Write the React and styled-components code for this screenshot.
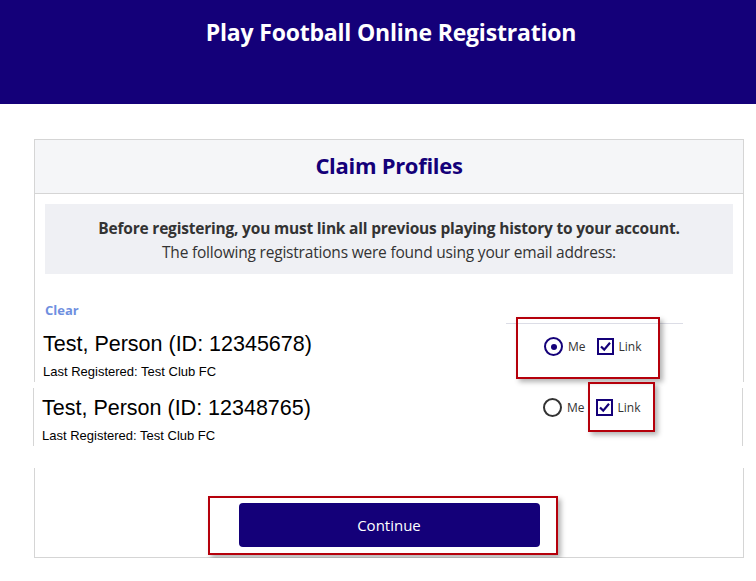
import React from 'react';
import styled, { createGlobalStyle } from 'styled-components';

const navy = '#140079';
const ui = '"Open Sans", "Noto Sans", sans-serif';
const arial = '"Liberation Sans", Arial, sans-serif';

const GlobalStyle = createGlobalStyle`
    html, body {
        margin: 0;
        padding: 0;
        background: #fff;
    }
    * {
        box-sizing: border-box;
    }
`;

const Banner = styled.header`
    height: 104px;
    background-color: ${navy};
    padding-top: 15px;
    text-align: center;
    & h1 {
        margin: 0;
        padding-left: 26px;
        font-family: ${ui};
        font-size: 23px;
        font-weight: 700;
        line-height: 34px;
        color: #fff;
        letter-spacing: -0.2px;
    }
`;

const Main = styled.main`
    position: relative;
    padding: 35px 0 0 34px;
`;

const Piece = styled.section`
    position: relative;
    width: 710px;
    margin-left: ${props => props.shift || 0}px;
    margin-top: ${props => props.gap || 0}px;
    border: 1px solid #d5d5d5;
    border-top-width: ${props => (props.top ? 1 : 0)}px;
    border-bottom-width: ${props => (props.bottom ? 1 : 0)}px;
`;

const CardHead = styled.div`
    height: 54px;
    padding-bottom: 4px;
    background-color: #f5f6f8;
    border-bottom: 1px solid #d5d5d5;
    display: flex;
    align-items: center;
    justify-content: center;
    & h2 {
        margin: 0;
        font-family: ${ui};
        font-size: 22px;
        font-weight: 700;
        color: ${navy};
        letter-spacing: -0.3px;
    }
`;

const Notice = styled.div`
    margin: 10px 10px 0;
    height: 70px;
    background-color: #eff0f4;
    padding-top: 12px;
    text-align: center;
    font-family: ${ui};
    font-size: 15.5px;
    line-height: 24px;
    color: #333;
    letter-spacing: -0.2px;
    & strong {
        display: block;
        font-weight: 700;
    }
`;

const ClearLink = styled.a`
    display: block;
    margin: 28px 0 0 10px;
    font-family: ${ui};
    font-size: 13px;
    font-weight: 700;
    line-height: 16px;
    color: #6f8fdf;
    text-decoration: none;
`;

const Row = styled.div`
    display: flex;
    align-items: flex-start;
    margin-top: ${props => props.offset || 0}px;
    padding-left: 8px;
`;

const Who = styled.div`
    flex: 1;
    padding-top: ${props => props.pad}px;
    padding-bottom: 3px;
    font-family: ${arial};
    color: #000;
    & .name {
        font-size: 21.5px;
        line-height: 24px;
    }
    & .last {
        margin-top: 8px;
        font-size: 13px;
        line-height: 15px;
    }
`;

const Choices = styled.div`
    width: 177px;
    margin-right: 60px;
    border-top: ${props => (props.rule ? '1px solid #dcdde6' : '0 none')};
    padding: ${props => props.pad}px 0 0 38px;
    display: flex;
    align-items: center;
`;

const Choice = styled.label`
    display: flex;
    align-items: center;
    gap: 5px;
    margin-right: 11px;
    font-family: ${ui};
    font-size: 12px;
    color: #333;
`;

const Radio = styled.span`
    width: 19px;
    height: 19px;
    border-radius: 50%;
    border: 2px solid ${props => (props.on ? navy : '#333')};
    display: flex;
    align-items: center;
    justify-content: center;
    &::after {
        content: '';
        width: 6px;
        height: 6px;
        border-radius: 50%;
        background: ${props => (props.on ? navy : 'transparent')};
    }
`;

const Check = styled.span`
    width: 17px;
    height: 17px;
    border: 2px solid ${navy};
    display: flex;
    align-items: center;
    justify-content: center;
    background: #fff;
`;

const Highlight = styled.div`
    position: absolute;
    left: ${props => props.x}px;
    top: ${props => props.y}px;
    width: ${props => props.w}px;
    height: ${props => props.h}px;
    border: 2px solid #b5000b;
    box-shadow: 3px 3px 5px rgba(0, 0, 0, 0.3);
    pointer-events: none;
`;

const Footer = styled.div`
    display: flex;
    justify-content: center;
    padding: 35px 0 10px;
`;

const Button = styled.button`
    width: 301px;
    height: 44px;
    border: 0 none;
    border-radius: 4px;
    background-color: ${navy};
    color: #fff;
    font-family: ${ui};
    font-size: 15px;
    cursor: pointer;
`;

const Tick = () => (
    <svg width="13" height="13" viewBox="0 0 13 13">
        <path d="M2 6.5 L5.2 9.6 L11 2.8" fill="none" stroke={navy} strokeWidth="2.2" />
    </svg>
);

const Controls = ({ me, rule, pad }) => (
    <Choices rule={rule} pad={pad}>
        <Choice><Radio on={me} />Me</Choice>
        <Choice><Check><Tick /></Check>Link</Choice>
    </Choices>
);

const App = () => (
    <>
        <GlobalStyle />
        <Banner><h1>Play Football Online Registration</h1></Banner>
        <Main>
            <Piece top>
                <CardHead><h2>Claim Profiles</h2></CardHead>
                <Notice>
                    <strong>Before registering, you must link all previous playing history to your account.</strong>
                    The following registrations were found using your email address:
                </Notice>
                <ClearLink href="#">Clear</ClearLink>
                <Row offset={5}>
                    <Who pad={9}>
                        <div className="name">Test, Person (ID: 12345678)</div>
                        <div className="last">Last Registered: Test Club FC</div>
                    </Who>
                    <Controls me rule pad={13} />
                </Row>
            </Piece>
            <Piece shift={-1} gap={6}>
                <Row>
                    <Who pad={8}>
                        <div className="name">Test, Person (ID: 12348765)</div>
                        <div className="last">Last Registered: Test Club FC</div>
                    </Who>
                    <Controls pad={10} />
                </Row>
            </Piece>
            <Piece gap={22} bottom>
                <Footer><Button>Continue</Button></Footer>
            </Piece>
            <Highlight x={516} y={213} w={144} h={62} />
            <Highlight x={588} y={278} w={67} h={50} />
            <Highlight x={208} y={392} w={350} h={59} />
        </Main>
    </>
);

export default App;
